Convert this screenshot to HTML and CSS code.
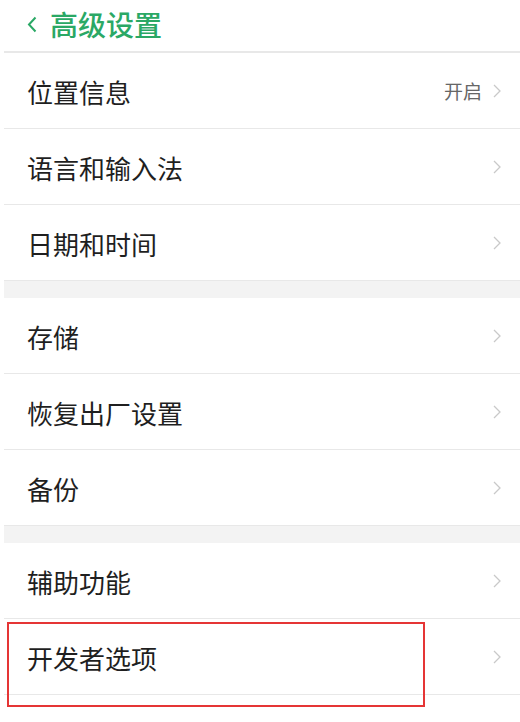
FILE: index.html
```html
<!DOCTYPE html>
<html lang="zh-CN">
<head>
<meta charset="utf-8">
<link rel="stylesheet" href="styles.css">
</head>
<body>
<div class="screen">
  <header class="topbar">
    <svg class="back" width="10" height="17" viewBox="0 0 10 17"><path d="M8.5 1.5 L2 8.5 L8.5 15.5" fill="none" stroke="#2aa865" stroke-width="2"/></svg>
    <span class="title">高级设置</span>
  </header>
  <div class="group">
    <div class="row"><span class="label">位置信息</span><span class="right"><span class="value">开启</span><svg class="chev" width="8" height="14" viewBox="0 0 8 14"><path d="M1 1 L7 7 L1 13" fill="none" stroke="#c9c9c9" stroke-width="1.3"/></svg></span></div>
    <div class="row"><span class="label">语言和输入法</span><span class="right"><svg class="chev" width="8" height="14" viewBox="0 0 8 14"><path d="M1 1 L7 7 L1 13" fill="none" stroke="#c9c9c9" stroke-width="1.3"/></svg></span></div>
    <div class="row"><span class="label">日期和时间</span><span class="right"><svg class="chev" width="8" height="14" viewBox="0 0 8 14"><path d="M1 1 L7 7 L1 13" fill="none" stroke="#c9c9c9" stroke-width="1.3"/></svg></span></div>
  </div>
  <div class="gap"></div>
  <div class="group">
    <div class="row"><span class="label">存储</span><span class="right"><svg class="chev" width="8" height="14" viewBox="0 0 8 14"><path d="M1 1 L7 7 L1 13" fill="none" stroke="#c9c9c9" stroke-width="1.3"/></svg></span></div>
    <div class="row"><span class="label">恢复出厂设置</span><span class="right"><svg class="chev" width="8" height="14" viewBox="0 0 8 14"><path d="M1 1 L7 7 L1 13" fill="none" stroke="#c9c9c9" stroke-width="1.3"/></svg></span></div>
    <div class="row"><span class="label">备份</span><span class="right"><svg class="chev" width="8" height="14" viewBox="0 0 8 14"><path d="M1 1 L7 7 L1 13" fill="none" stroke="#c9c9c9" stroke-width="1.3"/></svg></span></div>
  </div>
  <div class="gap"></div>
  <div class="group">
    <div class="row"><span class="label">辅助功能</span><span class="right"><svg class="chev" width="8" height="14" viewBox="0 0 8 14"><path d="M1 1 L7 7 L1 13" fill="none" stroke="#c9c9c9" stroke-width="1.3"/></svg></span></div>
    <div class="row highlighted"><span class="label">开发者选项</span><span class="right"><svg class="chev" width="8" height="14" viewBox="0 0 8 14"><path d="M1 1 L7 7 L1 13" fill="none" stroke="#c9c9c9" stroke-width="1.3"/></svg></span><div class="redbox"></div></div>
  </div>
</div>
</body>
</html>
```
FILE: styles.css
```css
html, body {
  margin: 0;
  padding: 0;
  background: #ffffff;
}
body {
  font-family: "Noto Sans CJK SC", "Noto Sans", sans-serif;
  color: #222222;
}
.screen {
  width: 520px;
  height: 722px;
  overflow: hidden;
  background: #ffffff;
  padding-left: 4px;
  box-sizing: border-box;
}
.topbar {
  height: 51px;
  display: flex;
  align-items: center;
  padding-left: 23px;
  border-bottom: 2px solid #e8e8e8;
  box-sizing: content-box;
}
.back {
  margin-right: 13px;
  margin-top: -2px;
}
.title {
  font-size: 28px;
  font-weight: 500;
  color: #2aa865;
  line-height: 1;
  margin-top: -4px;
}
.row {
  height: 75px;
  display: flex;
  align-items: center;
  justify-content: space-between;
  padding-left: 23px;
  padding-right: 19px;
  border-bottom: 1px solid #e8e8e8;
  position: relative;
}
.label {
  font-size: 26px;
  line-height: 1;
  color: #1f1f1f;
  margin-top: 2px;
}
.right {
  display: flex;
  align-items: center;
}
.value {
  font-size: 19px;
  color: #666666;
  margin-right: 11px;
  margin-top: 0;
}
.chev {
  display: block;
}
.gap {
  height: 17px;
  background: #f3f3f3;
}
.redbox {
  position: absolute;
  left: 3px;
  top: 3px;
  width: 418px;
  height: 85px;
  border: 2px solid #e53535;
  box-sizing: border-box;
}
```
